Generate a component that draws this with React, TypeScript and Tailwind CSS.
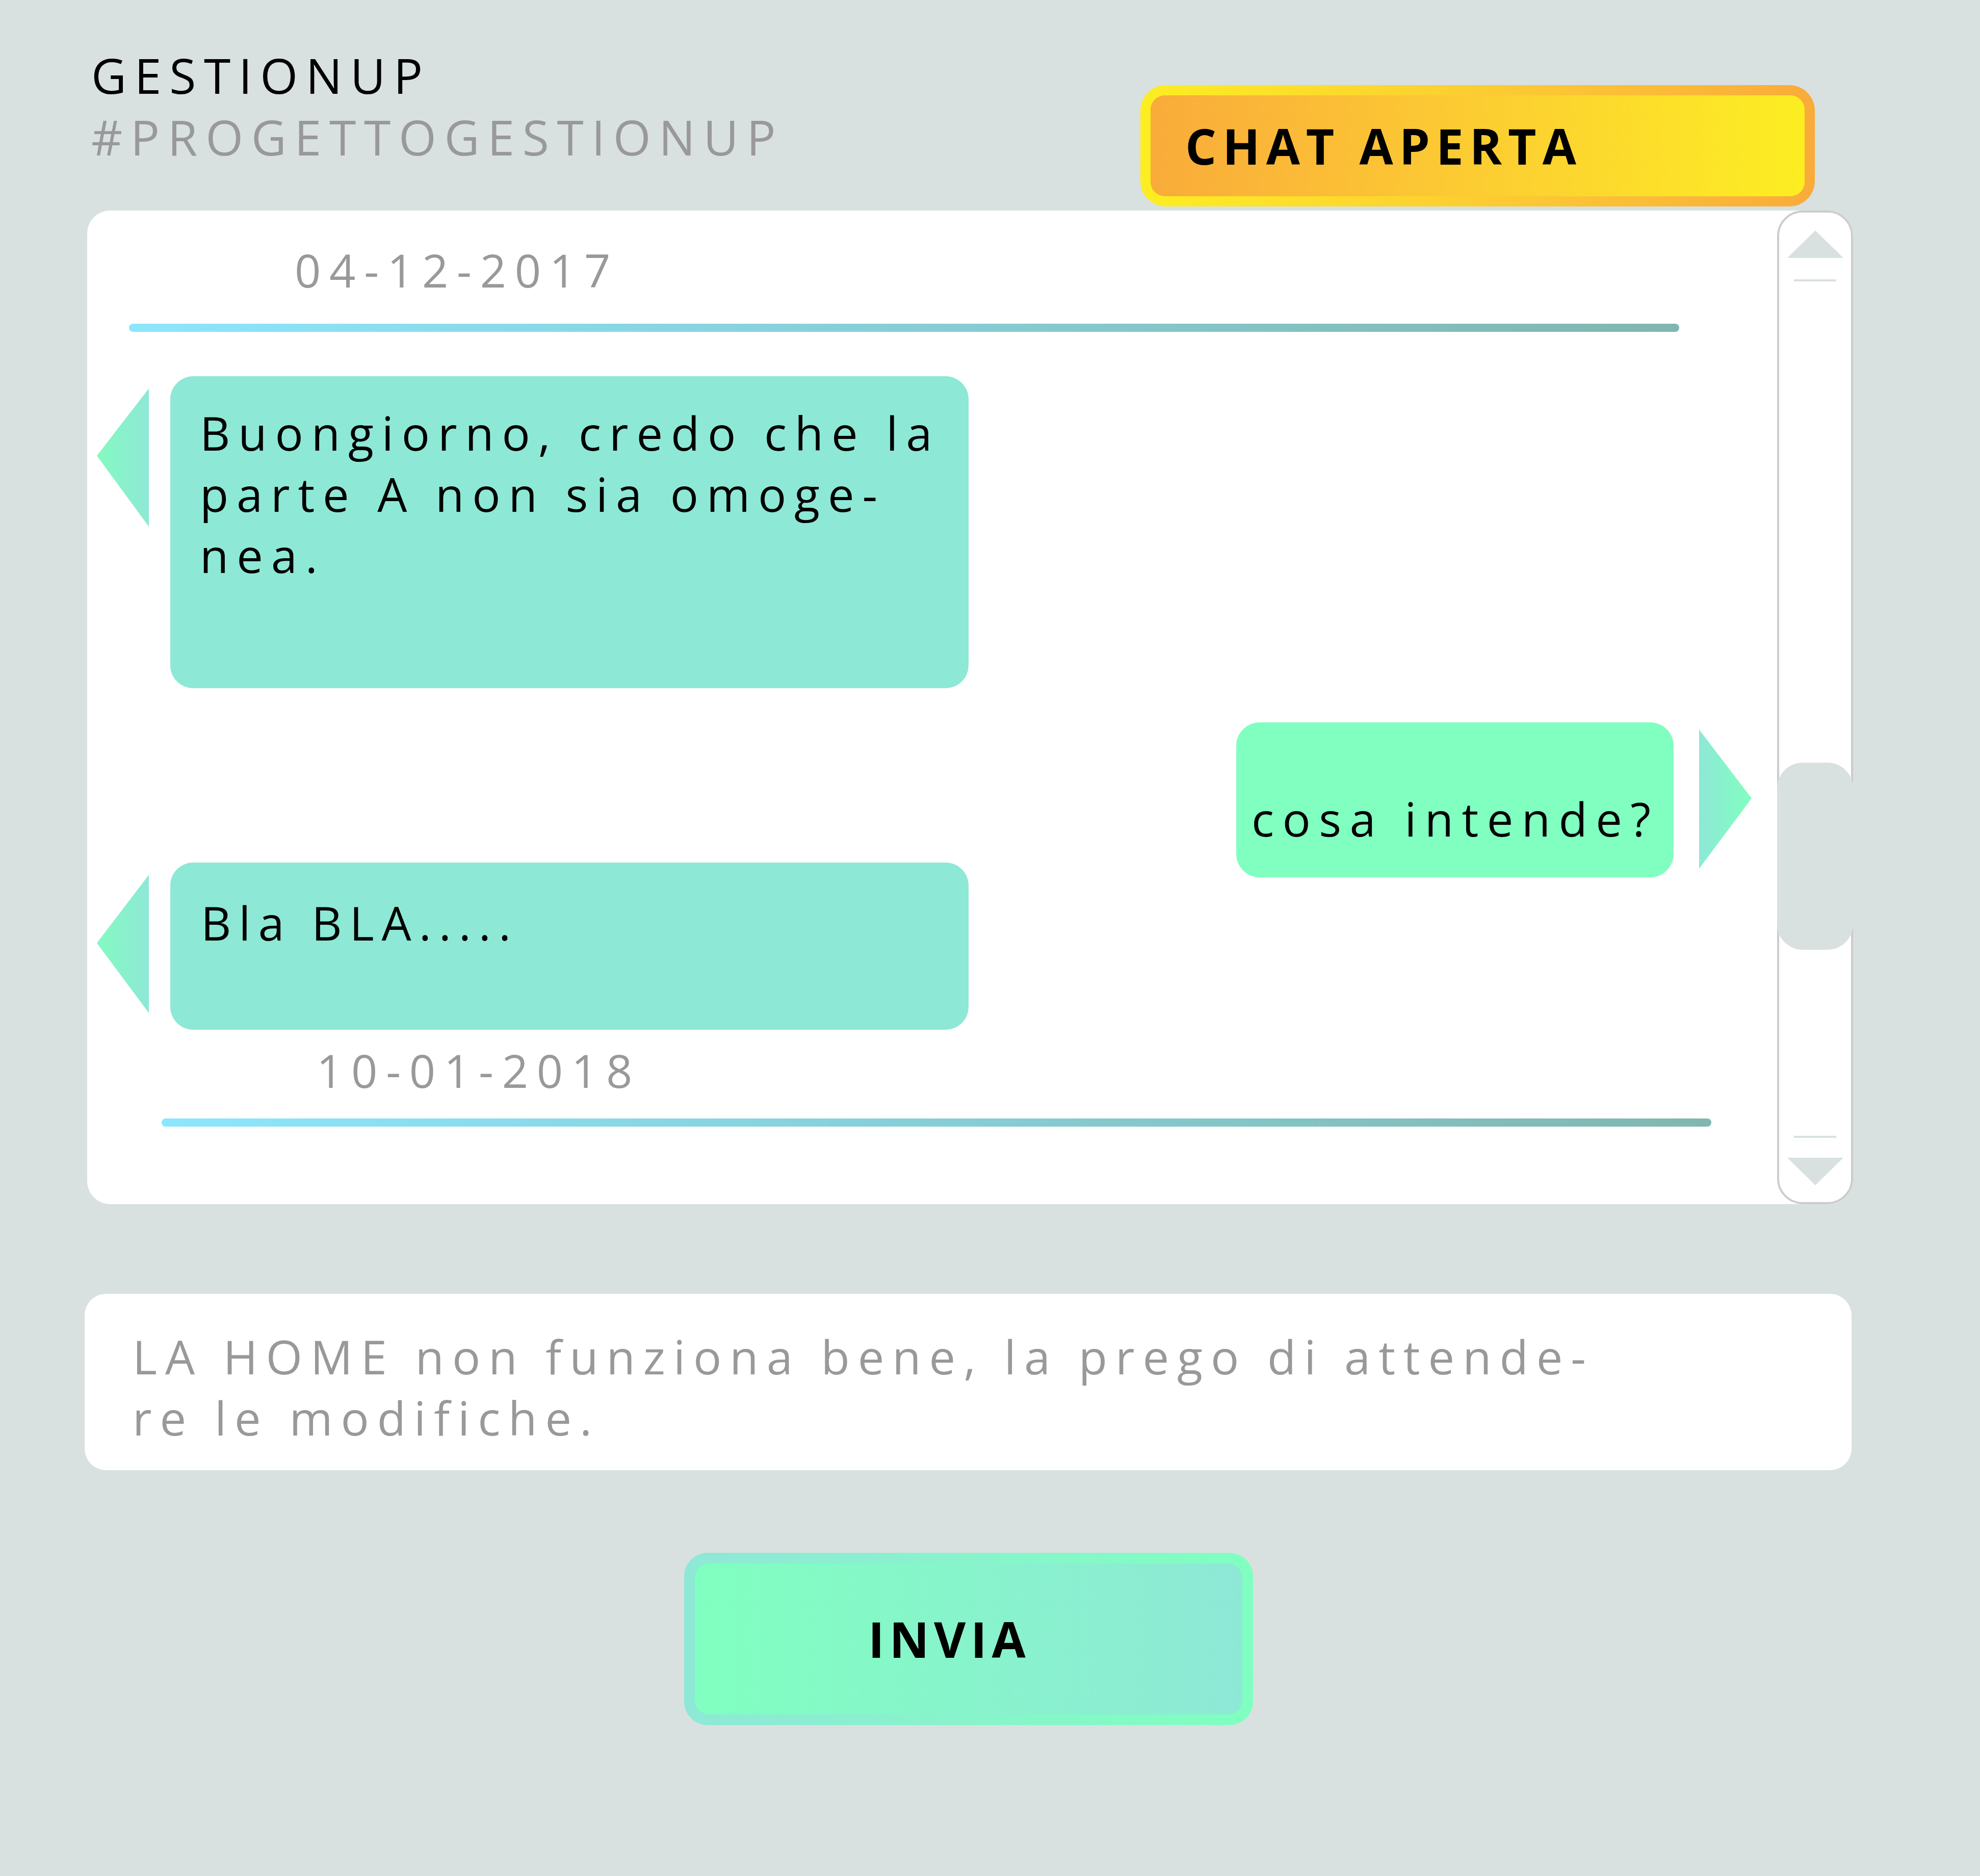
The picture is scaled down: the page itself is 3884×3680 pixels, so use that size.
import React from 'react';

type TailProps = {
  id: string;
  side: 'left' | 'right';
  width: number;
  height: number;
  apex: number;
  from: string;
  to: string;
  className?: string;
};

const Tail: React.FC<TailProps> = ({ id, side, width, height, apex, from, to, className }) => {
  const points =
    side === 'left'
      ? `0,${apex} ${width},0 ${width},${height}`
      : `0,0 ${width},${apex} 0,${height}`;
  return (
    <svg width={width} height={height} viewBox={`0 0 ${width} ${height}`} className={className}>
      <defs>
        <linearGradient id={id} x1="0" y1="0" x2="1" y2="0">
          <stop offset="0" stopColor={from} />
          <stop offset="1" stopColor={to} />
        </linearGradient>
      </defs>
      <polygon points={points} fill={`url(#${id})`} />
    </svg>
  );
};

const Arrow: React.FC<{ up?: boolean }> = ({ up }) => (
  <svg width={110} height={54} viewBox="0 0 110 54" className="mx-auto block">
    <polygon points={up ? '55,0 110,54 0,54' : '0,0 110,0 55,54'} fill="#d8e1e0" />
  </svg>
);

export default function App() {
  return (
    <div className="w-[3884px] h-[3680px] bg-[#d8e1e0] font-['Open_Sans',sans-serif] overflow-hidden">
      {/* header */}
      <header className="flex h-[413px]">
        <div className="ml-[179px] mt-[101px]">
          <div className="text-[95px] leading-[92px] tracking-[0.165em] text-black">GESTIONUP</div>
          <div className="mt-[29px] text-[95px] leading-[92px] tracking-[0.165em] text-[#999999]">
            #PROGETTOGESTIONUP
          </div>
        </div>
        <div className="ml-auto mr-[324px] mt-[167px] w-[1323px] h-[238px] rounded-[50px] p-[20px] bg-linear-to-r from-[#fcee21] to-[#f9ab3a]">
          <div className="h-full w-full rounded-[28px] bg-linear-to-r from-[#f9ab3a] to-[#fcee21] flex items-center pl-[68px]">
            <span className="text-[96px] leading-none font-bold tracking-[0.125em] text-black">CHAT APERTA</span>
          </div>
        </div>
      </header>

      {/* chat panel */}
      <section className="ml-[171px] w-[3464px] h-[1949px] flex bg-white rounded-l-[45px] rounded-r-[50px]">
        <div className="flex-1 flex flex-col">
          <div className="ml-[407px] mt-[72px] text-[90px] leading-[88px] tracking-[0.185em] text-[#999999]">
            04-12-2017
          </div>
          <div className="ml-[82px] mt-[62px] w-[3041px] h-[16px] rounded-full bg-linear-to-r from-[#8ce6fd] to-[#80b6af]" />

          <div className="mt-[87px] flex items-start">
            <Tail id="t1" side="left" width={102} height={271} apex={132} from="#84fac0" to="#8ee8d6" className="ml-[19px] mt-[24px]" />
            <div className="ml-[42px] w-[1566px] h-[612px] rounded-[45px] bg-[#8ee8d6] pt-[51px] pl-[58px] text-[92px] leading-[120px] tracking-[0.172em] text-black whitespace-nowrap">
              <div>Buongiorno, credo che la</div>
              <div>parte A non sia omoge-</div>
              <div>nea.</div>
            </div>
          </div>

          <div className="mt-[67px] flex items-start">
            <div className="ml-[2254px] w-[858px] h-[304px] rounded-[46px] bg-[#80ffc0] pt-[129px] pl-[30px] text-[92px] leading-[120px] tracking-[0.178em] text-black whitespace-nowrap">
              cosa intende?
            </div>
            <Tail id="t2" side="right" width={103} height={273} apex={135} from="#8ee8d6" to="#80ffc0" className="ml-[50px] mt-[14px]" />
          </div>

          <div className="mt-[-29px] flex items-start">
            <Tail id="t3" side="left" width={102} height={271} apex={134} from="#84fac0" to="#8ee8d6" className="ml-[19px] mt-[24px]" />
            <div className="ml-[42px] w-[1566px] h-[328px] rounded-[45px] bg-[#8ee8d6] pt-[58px] pl-[60px] text-[92px] leading-[120px] tracking-[0.162em] text-black whitespace-nowrap">
              Bla BLA.....
            </div>
          </div>

          <div className="ml-[450px] mt-[35px] text-[90px] leading-[88px] tracking-[0.185em] text-[#999999]">
            10-01-2018
          </div>
          <div className="ml-[146px] mt-[51px] w-[3040px] h-[16px] rounded-full bg-linear-to-r from-[#8ce6fd] to-[#80b6af]" />
        </div>

        {/* scrollbar */}
        <div className="w-[149px] h-full rounded-[50px] border-4 border-[#cccccc] bg-white flex flex-col">
          <div className="mt-[35px]">
            <Arrow up />
          </div>
          <div className="mt-[42px] mx-auto w-[83px] h-[4px] bg-[#d8e1e0]" />
          <div className="mt-[944px] -mx-[4px] h-[367px] rounded-[50px] bg-[#d8e1e0]" />
          <div className="mt-[365px] mx-auto w-[83px] h-[4px] bg-[#d8e1e0]" />
          <div className="mt-[39px]">
            <Arrow />
          </div>
        </div>
      </section>

      {/* message input */}
      <div className="ml-[166px] mt-[176px] w-[3466px] h-[346px] rounded-[42px] bg-white pt-[63px] pl-[94px] text-[92px] leading-[120px] tracking-[0.173em] text-[#999999] whitespace-nowrap">
        <div>LA HOME non funziona bene, la prego di attende-</div>
        <div>re le modifiche.</div>
      </div>

      {/* send button */}
      <div className="ml-[1342px] mt-[162px] w-[1116px] h-[338px] rounded-[46px] p-[21px] bg-linear-to-r from-[#8ee8d6] to-[#80ffc0]">
        <div className="h-full w-full rounded-[28px] bg-linear-to-r from-[#80ffc0] to-[#8ee8d6] flex items-center pl-[340px]">
          <span className="text-[96px] leading-none font-bold tracking-[0.1em] text-black">INVIA</span>
        </div>
      </div>
    </div>
  );
}
